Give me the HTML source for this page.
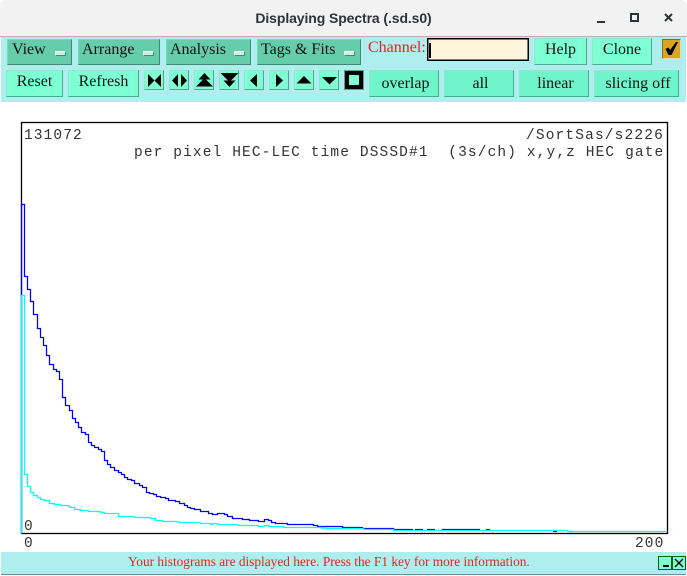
<!DOCTYPE html>
<html><head><meta charset="utf-8"><style>
html,body{margin:0;padding:0;background:#fff}
body{width:687px;height:576px;position:relative;overflow:hidden;font-family:"Liberation Serif",serif;color:#111}
div{position:absolute;box-sizing:border-box}
.b{background:#7fffd4;border:1px solid;border-color:#8fe8cc #4fa88c #4fa88c #8fe8cc;font-size:16px;text-align:center;line-height:22px}
.c{background:#70f5ca;line-height:25px;padding-left:3px}
.m{background:#66cdaa;border:1px solid;border-color:#7ad8b8 #3f8a72 #3f8a72 #7ad8b8;font-size:16px;line-height:19px;padding-left:3px}
.m i{position:absolute;right:5px;top:11px;width:11px;height:5px;background:#cfeee2;border:1px solid;border-color:#eafff8 #3f8a72 #3f8a72 #eafff8;box-sizing:border-box}
.i{background:#7fffd4;border:1px solid;border-color:#8fe8cc #4fa88c #4fa88c #8fe8cc;width:20px;height:20px;top:70px}
.t{font-family:"Liberation Mono",monospace;font-size:14.5px;letter-spacing:1.1px;color:#333;white-space:pre;line-height:16px}
</style></head><body>
<div style="left:0;top:0;width:687px;height:37px;background:#f2f2f2;border-bottom:1px solid #b5b3ae;border-radius:6px 6px 0 0"></div>
<div style="left:0;top:8px;width:687px;text-align:center;font:bold 14px/20px 'Liberation Sans',sans-serif;color:#2e3436;letter-spacing:-.1px">Displaying Spectra (.sd.s0)</div>
<svg style="position:absolute;left:590px;top:8px" width="90" height="22">
<rect x="7" y="13" width="8" height="2" fill="#2e3436"/>
<rect x="41" y="6" width="7" height="7" fill="none" stroke="#2e3436" stroke-width="2"/>
<path d="M75 6l7 7M82 6l-7 7" stroke="#2e3436" stroke-width="2"/></svg>

<div style="left:1px;top:37px;width:685px;height:65px;background:#afeeee"></div>
<div class="m" style="left:7px;top:39px;width:65px;height:26px;padding-left:4px">View<i></i></div>
<div class="m" style="left:78px;top:39px;width:82px;height:26px">Arrange<i></i></div>
<div class="m" style="left:166px;top:39px;width:85px;height:26px">Analysis<i></i></div>
<div class="m" style="left:257px;top:39px;width:104px;height:26px">Tags &amp; Fits<i></i></div>
<div style="left:368px;top:38px;font-size:16px;line-height:20px;color:#ee1c25">Channel:</div>
<div style="left:427px;top:38px;width:102px;height:23px;background:#fff5dc;border:1px solid #000;box-shadow:inset 0 0 0 .5px #000"></div>
<div style="left:429px;top:43px;width:2px;height:15px;background:#000"></div>
<div class="b" style="left:534px;top:38px;width:53px;height:27px">Help</div>
<div class="b" style="left:592px;top:38px;width:60px;height:27px">Clone</div>
<div style="left:662px;top:39px;width:19px;height:20px;background:#daa520;border:1px solid;border-color:#8a6a18 #e8d8a8 #e8d8a8 #8a6a18"></div>
<svg style="position:absolute;left:662px;top:39px" width="20" height="20" fill="#000"><path d="M3.500 10l3-1.500 1.500 2.500 6-8h2l-6.500 13h-3z"/></svg>

<div class="b" style="left:6px;top:70px;width:57px;height:27px">Reset</div>
<div class="b" style="left:68px;top:70px;width:71px;height:27px">Refresh</div>
<div class="i" style="left:144px"></div><div class="i" style="left:169px"></div><div class="i" style="left:194px"></div>
<div class="i" style="left:219px"></div><div class="i" style="left:244px"></div><div class="i" style="left:269px"></div>
<div class="i" style="left:294px"></div><div class="i" style="left:319px"></div>
<div style="left:344px;top:70px;width:20px;height:20px;background:#4fa88c"></div>
<div style="left:345px;top:71px;width:18px;height:18px;background:#7fffd4;border:4px solid #000"></div>
<svg style="position:absolute;left:0;top:0" width="687" height="100" fill="#000">
<path d="M148 74l6.500 6.500-6.500 6.500zM161 74l-6.500 6.500 6.500 6.500z"/>
<path d="M178 74v13l-6-6.500zM181 74v13l6-6.500z"/>
<path d="M204.500 73l6 6.500h-12zM204.500 78l8.500 8.500h-17z"/>
<path d="M229.500 87l-6-6.500h12zM229.500 82l-9-9h18z"/>
<path d="M257 74v13l-7-6.500z"/>
<path d="M276 74v13l7-6.500z"/>
<path d="M304 76l7.500 7.500h-15z"/>
<path d="M329.500 84.500l-7.500-7.500h15z"/>
</svg>
<div class="b c" style="left:369px;top:70px;width:70px;height:27px">overlap</div>
<div class="b c" style="left:444px;top:70px;width:70px;height:27px">all</div>
<div class="b c" style="left:519px;top:70px;width:70px;height:27px">linear</div>
<div class="b c" style="left:594px;top:70px;width:85px;height:27px">slicing off</div>

<svg style="position:absolute;left:0;top:0" width="687" height="576" fill="none">
<rect x="21.500" y="122.500" width="646" height="411" stroke="#000" stroke-width="1.300"/>
<g transform="translate(0,.5)" stroke-width="1.250">
<path stroke="#0000ff" d="M21.500 533V204H24.500V276H27.500V289H30.500V301H33.500V314H37.500V328H40.500V337H43.500V345H46.500V355H49.500V364H53.500V369H56.500V371H59.500V379H62.500V397H65.500V405H69.500V410H72.500V418H75.500V422H78.500V427H81.500V432H85.500V434H88.500V442H91.500V445H94.500V447H98.500V449H101.500V451H104.500V460H107.500V464H110.500V467H114.500V470H118.500V472H121.500V474H124.500V477H127.500V479H131.500V480H134.500V483H139.500V485H142.500V487H146.500V492H149.500V493H153.500V494H156.500V496H160.500V497H165.500V498H168.500V500H175.500V501H179.500V503H184.500V505H187.500V507H190.500V508H194.500V509H200.500V511H208.500V513H212.500V514H217.500V513H224.500V514H227.500V516H232.500V518H242.500V519H249.500V520H258.500V521H264.500V519H268.500V520H271.500V522H275.500V523H287.500V524H313.500V525H317.500V526H342.500V527H362.500V528H393.500V529H413M415 529H423M427 529H435M442 529H480M486 529H490M553 531H557M569 531H573"/>
<path stroke="#00ffff" d="M21.500 533V295H24.500V474H27.500V486H30.500V492H33.500V495H37.500V497H40.500V499H44.500V500H49.500V503H54.500V504H60.500V505H68.500V506H70.500V507H74.500V509H80.500V510H88.500V511H100.500V512H104.500V513H118.500V516H134.500V517H150.500V518H155.500V520H162.500V521H178.500V522H200.500V523H210.500V524H212.500V523H217.500V524H237.500V525H258.500V526H264.500V525H268.500V526H283.500V527H322.500V528H323.500V527H325.500V528H363.500V529H393.500V530H567.500V531H667"/>
</g>
</svg>
<div class="t" style="left:24px;top:128px">131072</div>
<div class="t" style="left:526px;top:128px;letter-spacing:1.15px">/SortSas/s2226</div>
<div class="t" style="left:134px;top:145px;letter-spacing:1.12px">per pixel HEC-LEC time DSSSD#1  (3s/ch) x,y,z HEC gate</div>
<div class="t" style="left:24px;top:519px">0</div>
<div class="t" style="left:24px;top:536px">0</div>
<div class="t" style="left:635px;top:536px">200</div>

<div style="left:1px;top:552px;width:685px;height:23px;background:#afeeee;border-bottom:1px solid #6a8f8f"></div>
<div style="left:128px;top:554px;font-size:13.330px;line-height:16px;color:#ee1c25;white-space:pre">Your histograms are displayed here. Press the F1 key for more information.</div>
<div style="left:658px;top:556px;width:14px;height:14px;background:#7fffd4;border:1px solid #006400"></div>
<div style="left:663px;top:565px;width:6px;height:2px;background:#000"></div>
<div style="left:672px;top:556px;width:14px;height:14px;background:#7fffd4;border:1px solid #006400"></div>
<svg style="position:absolute;left:672px;top:556px" width="14" height="14"><path d="M3 3l8 8M11 3l-8 8" stroke="#000" stroke-width="1.300"/></svg>
</body></html>
